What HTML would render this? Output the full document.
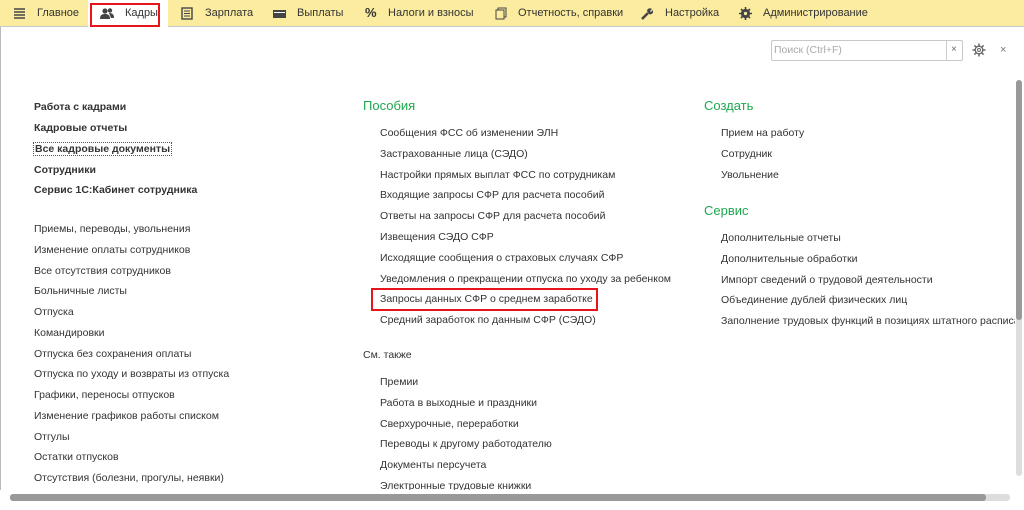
<!DOCTYPE html>
<html><head><meta charset="utf-8"><style>
body{margin:0;width:1024px;height:507px;overflow:hidden;background:#fff;font-family:"Liberation Sans",Arial,sans-serif;font-size:10.5px;color:#333;position:relative}
.top{position:absolute;left:0;top:0;width:1024px;height:26px;background:#fbeca0;border-bottom:1px solid #c8c8c8}
.t{position:absolute;top:7px;font-size:11px;color:#333}
.ic{position:absolute;top:7px}
.a{position:absolute;white-space:nowrap}
.b{font-weight:bold}
.g{color:#1ea84f;font-size:13px}
</style></head><body>
<div class="top">
<div style="position:absolute;left:88px;top:0;width:80px;height:27px;background:#fff"></div>
<div style="position:absolute;left:90px;top:3px;width:66px;height:20px;border:2px solid #e8141b"></div>
<svg class="ic" style="left:13px" width="13" height="13"><path d="M1 2h11M1 5h11M1 8h11M1 11h11" stroke="#444" stroke-width="1.6"/></svg>
<div class="t" style="left:37px">Главное</div>
<svg class="ic" style="left:100px" width="14" height="13"><circle cx="5" cy="4" r="2.6" fill="#444"/><circle cx="10" cy="3.5" r="2.2" fill="#444"/><path d="M0 12c0-4 2-5 5-5s5 1 5 5z" fill="#444"/><path d="M9 6c3 0 5 1 5 5h-3z" fill="#444"/></svg>
<div class="t" style="left:125px">Кадры</div>
<svg class="ic" style="left:181px" width="12" height="13"><rect x="1" y="1" width="10" height="11" fill="none" stroke="#444" stroke-width="1.4"/><path d="M3 4h6M3 6.5h6M3 9h6" stroke="#444"/></svg>
<div class="t" style="left:205px">Зарплата</div>
<svg class="ic" style="left:273px" width="13" height="13"><rect x="0" y="3" width="13" height="8" fill="#444"/><rect x="1" y="5" width="11" height="1" fill="#fff"/></svg>
<div class="t" style="left:297px">Выплаты</div>
<div class="t" style="left:365px;font-weight:bold;font-size:13px;top:5px">%</div>
<div class="t" style="left:388px">Налоги и взносы</div>
<svg class="ic" style="left:495px" width="12" height="13"><rect x="3" y="1" width="8" height="9" fill="none" stroke="#444"/><rect x="1" y="3" width="8" height="9" fill="#fbeca0" stroke="#444"/></svg>
<div class="t" style="left:518px">Отчетность, справки</div>
<svg class="ic" style="left:640px" width="13" height="13"><path d="M2 12L8 6" stroke="#444" stroke-width="2.5"/><path d="M7 4a3 3 0 0 1 5-2l-2 2 1 1 2-2a3 3 0 0 1-4 4z" fill="#444"/></svg>
<div class="t" style="left:665px">Настройка</div>
<svg class="ic" style="left:739px" width="13" height="13"><circle cx="6.5" cy="6.5" r="3.5" fill="none" stroke="#444" stroke-width="2.2"/><path d="M6.5 0v13M0 6.5h13M2 2l9 9M11 2l-9 9" stroke="#444" stroke-width="1.6"/><circle cx="6.5" cy="6.5" r="1.6" fill="#fbeca0"/></svg>
<div class="t" style="left:763px">Администрирование</div>
</div>
<div style="position:absolute;left:0;top:27px;width:1px;height:480px;background:#bbb"></div>
<div style="position:absolute;left:771px;top:40px;width:190px;height:19px;border:1px solid #c8c8c8;border-radius:2px"></div>
<div class="a" style="left:774px;top:44px;color:#aaa">Поиск (Ctrl+F)</div>
<div style="position:absolute;left:946px;top:41px;width:1px;height:19px;background:#ccc"></div>
<div class="a" style="left:951px;top:44px;color:#666;font-size:10px">×</div>
<svg style="position:absolute;left:972px;top:43px" width="14" height="14"><circle cx="7" cy="7" r="3.8" fill="none" stroke="#666" stroke-width="1.3"/><path d="M7 0.5v2.5M7 11v2.5M0.5 7h2.5M11 7h2.5M2.4 2.4l1.8 1.8M9.8 9.8l1.8 1.8M11.6 2.4l-1.8 1.8M4.2 9.8l-1.8 1.8" stroke="#666" stroke-width="1.5"/><circle cx="7" cy="7" r="1.5" fill="none" stroke="#666"/></svg>
<div class="a" style="left:1000px;top:44px;color:#777;font-size:11px">×</div>

<div class="a b" style="left:34px;top:101px">Работа с кадрами</div>
<div class="a b" style="left:34px;top:122px">Кадровые отчеты</div>
<div class="a b" style="left:33px;top:142px;border:1px dotted #555;padding:0 1px">Все кадровые документы</div>
<div class="a b" style="left:34px;top:164px">Сотрудники</div>
<div class="a b" style="left:34px;top:184px">Сервис 1С:Кабинет сотрудника</div>
<div class="a" style="left:34px;top:219px;line-height:20.75px">Приемы, переводы, увольнения<br>Изменение оплаты сотрудников<br>Все отсутствия сотрудников<br>Больничные листы<br>Отпуска<br>Командировки<br>Отпуска без сохранения оплаты<br>Отпуска по уходу и возвраты из отпуска<br>Графики, переносы отпусков<br>Изменение графиков работы списком<br>Отгулы<br>Остатки отпусков<br>Отсутствия (болезни, прогулы, неявки)<br>Переходы на работу</div>

<div class="a g" style="left:363px;top:98px">Пособия</div>
<div class="a" style="left:380px;top:123px;line-height:20.8px">Сообщения ФСС об изменении ЭЛН<br>Застрахованные лица (СЭДО)<br>Настройки прямых выплат ФСС по сотрудникам<br>Входящие запросы СФР для расчета пособий<br>Ответы на запросы СФР для расчета пособий<br>Извещения СЭДО СФР<br>Исходящие сообщения о страховых случаях СФР<br>Уведомления о прекращении отпуска по уходу за ребенком<br>Запросы данных СФР о среднем заработке<br>Средний заработок по данным СФР (СЭДО)</div>
<div style="position:absolute;left:371px;top:288px;width:223px;height:19px;border:2px solid #e8141b"></div>
<div class="a" style="left:363px;top:349px">См. также</div>
<div class="a" style="left:380px;top:372px;line-height:20.8px">Премии<br>Работа в выходные и праздники<br>Сверхурочные, переработки<br>Переводы к другому работодателю<br>Документы персучета<br>Электронные трудовые книжки</div>

<div class="a g" style="left:704px;top:98px">Создать</div>
<div class="a" style="left:721px;top:123px;line-height:20.8px">Прием на работу<br>Сотрудник<br>Увольнение</div>
<div class="a g" style="left:704px;top:203px">Сервис</div>
<div class="a" style="left:721px;top:228px;line-height:20.8px">Дополнительные отчеты<br>Дополнительные обработки<br>Импорт сведений о трудовой деятельности<br>Объединение дублей физических лиц<br>Заполнение трудовых функций в позициях штатного расписа</div>

<div style="position:absolute;left:1015px;top:60px;width:9px;height:440px;background:#fff"></div>
<div style="position:absolute;left:1016px;top:80px;width:6px;height:396px;background:#ddd;border-radius:3px"></div>
<div style="position:absolute;left:1016px;top:80px;width:6px;height:240px;background:#999;border-radius:3px"></div>
<div style="position:absolute;left:0;top:490px;width:1024px;height:17px;background:#fff"></div>
<div style="position:absolute;left:10px;top:494px;width:1000px;height:7px;background:#ddd;border-radius:3px"></div>
<div style="position:absolute;left:10px;top:494px;width:976px;height:7px;background:#999;border-radius:3px"></div>
</body></html>
